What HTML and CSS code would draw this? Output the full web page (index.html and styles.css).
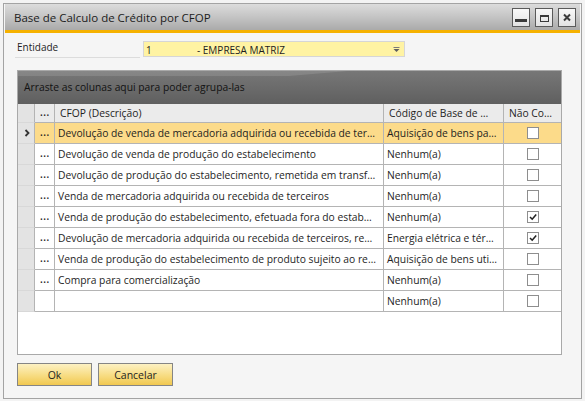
FILE: index.html
```html
<!DOCTYPE html>
<html lang="pt">
<head>
<meta charset="utf-8">
<title>Base de Calculo de Crédito por CFOP</title>
<link rel="stylesheet" href="styles.css">
</head>
<body>
<div class="window">
  <div class="titlebar">
    <span class="title">Base de Calculo de Crédito por CFOP</span>
    <div class="wbtns">
      <span class="wbtn"><svg width="16" height="17" viewBox="0 0 16 17"><rect x="2" y="10" width="12" height="3" fill="#3a3a3a"/></svg></span>
      <span class="wbtn"><svg width="16" height="17" viewBox="0 0 16 17"><rect x="4.5" y="6.5" width="8" height="6" fill="none" stroke="#3a3a3a"/><rect x="4" y="6" width="9" height="2" fill="#3a3a3a"/></svg></span>
      <span class="wbtn"><svg width="16" height="17" viewBox="0 0 16 17"><path d="M5 5.5L11 11.5M11 5.5L5 11.5" stroke="#3a3a3a" stroke-width="2"/></svg></span>
    </div>
  </div>
  <div class="content">
    <div class="field">
      <span class="label">Entidade</span>
      <div class="combo">
        <span class="code">1</span><span class="name">- EMPRESA MATRIZ</span>
        <svg class="arrow" width="7" height="5" viewBox="0 0 7 5"><rect x="0.5" y="0" width="6" height="1" fill="#7a7a7a"/><path d="M0.5 2L6.5 2L3.5 5Z" fill="#5e5e5e"/></svg>
      </div>
    </div>
    <div class="grid">
      <div class="grouppanel">Arraste as colunas aqui para poder agrupa-las</div>
      <div class="row head">
        <div class="c ind"></div>
        <div class="c dots">…</div>
        <div class="c">CFOP (Descrição)</div>
        <div class="c">Código de Base de …</div>
        <div class="c">Não Co…</div>
      </div>
      <div class="row sel">
        <div class="c ind"><svg width="16" height="20" viewBox="0 0 16 20"><path d="M7.5 7L10.5 10L7.5 13" fill="none" stroke="#333" stroke-width="1.8"/></svg></div>
        <div class="c dots">…</div>
        <div class="c">Devolução de venda de mercadoria adquirida ou recebida de ter…</div>
        <div class="c">Aquisição de bens pa…</div>
        <div class="c chk"><span class="cb"></span></div>
      </div>
      <div class="row">
        <div class="c ind"></div>
        <div class="c dots">…</div>
        <div class="c">Devolução de venda de produção do estabelecimento</div>
        <div class="c">Nenhum(a)</div>
        <div class="c chk"><span class="cb"></span></div>
      </div>
      <div class="row">
        <div class="c ind"></div>
        <div class="c dots">…</div>
        <div class="c">Devolução de produção do estabelecimento, remetida em transf…</div>
        <div class="c">Nenhum(a)</div>
        <div class="c chk"><span class="cb"></span></div>
      </div>
      <div class="row">
        <div class="c ind"></div>
        <div class="c dots">…</div>
        <div class="c">Venda de mercadoria adquirida ou recebida de terceiros</div>
        <div class="c">Nenhum(a)</div>
        <div class="c chk"><span class="cb"></span></div>
      </div>
      <div class="row">
        <div class="c ind"></div>
        <div class="c dots">…</div>
        <div class="c">Venda de produção do estabelecimento, efetuada fora do estab…</div>
        <div class="c">Nenhum(a)</div>
        <div class="c chk"><span class="cb"><svg width="10" height="10" viewBox="0 0 10 10"><path d="M2 5L4.2 7.2L8.2 2.6" fill="none" stroke="#222" stroke-width="1.6"/></svg></span></div>
      </div>
      <div class="row">
        <div class="c ind"></div>
        <div class="c dots">…</div>
        <div class="c">Devolução de mercadoria adquirida ou recebida de terceiros, re…</div>
        <div class="c">Energia elétrica e tér…</div>
        <div class="c chk"><span class="cb"><svg width="10" height="10" viewBox="0 0 10 10"><path d="M2 5L4.2 7.2L8.2 2.6" fill="none" stroke="#222" stroke-width="1.6"/></svg></span></div>
      </div>
      <div class="row">
        <div class="c ind"></div>
        <div class="c dots">…</div>
        <div class="c">Venda de produção do estabelecimento de produto sujeito ao re…</div>
        <div class="c">Aquisição de bens uti…</div>
        <div class="c chk"><span class="cb"></span></div>
      </div>
      <div class="row">
        <div class="c ind"></div>
        <div class="c dots">…</div>
        <div class="c">Compra para comercialização</div>
        <div class="c">Nenhum(a)</div>
        <div class="c chk"><span class="cb"></span></div>
      </div>
      <div class="row">
        <div class="c ind"></div>
        <div class="c dots"></div>
        <div class="c"></div>
        <div class="c">Nenhum(a)</div>
        <div class="c chk"><span class="cb"></span></div>
      </div>
    </div>
    <div class="actions">
      <button class="btn">Ok</button>
      <button class="btn">Cancelar</button>
    </div>
  </div>
</div>
</body>
</html>
```
FILE: styles.css
```css
html, body {
  margin: 0;
  padding: 0;
}
body {
  background: #f3f3f3;
  font-family: "Open Sans", "Noto Sans", sans-serif;
  font-size: 10px;
  color: #1e1e1e;
  width: 585px;
  height: 401px;
  overflow: hidden;
}
.window {
  margin: 3px 0 0 3px;
  width: 579px;
  height: 396px;
  box-sizing: border-box;
  border: 1px solid #a3a3a3;
  padding: 0 1px 1px 1px;
  background: #f5f5f5;
  display: flex;
  flex-direction: column;
}
.titlebar {
  height: 29px;
  box-sizing: border-box;
  border-bottom: 3px solid #f5b100;
  background: linear-gradient(180deg, #dcdcdc 0%, #c4c4c4 50%, #aaaaaa 100%);
  display: flex;
  align-items: center;
  justify-content: space-between;
  padding: 0 4px 0 9px;
}
.title {
  font-size: 11.5px;
  color: #1c1c1c;
}
.wbtns {
  display: flex;
  gap: 5px;
}
.wbtn {
  width: 18px;
  height: 19px;
  box-sizing: border-box;
  border: 1px solid #5a5a5a;
  background: linear-gradient(180deg, #f8f8f8, #e2e2e2);
  display: flex;
}
.content {
  flex: 1;
  display: flex;
  flex-direction: column;
  padding: 8px 0 0 10px;
}
.field {
  display: flex;
  align-items: flex-start;
  gap: 3px;
}
.label {
  width: 125px;
  height: 17px;
  box-sizing: border-box;
  padding: 0 0 0 2px;
  border-bottom: 1px solid #dcdcdc;
  line-height: 13px;
}
.combo {
  width: 262px;
  height: 16px;
  box-sizing: border-box;
  border: 1px solid #d6d6d6;
  background: #fff3a3;
  display: flex;
  align-items: center;
  padding: 2px 4px 0 2px;
}
.code {
  width: 51px;
}
.name {
  flex: 1;
}
.arrow {
  margin-top: -2px;
}
.grid {
  margin: 12px 0 0 2px;
  width: 545px;
  height: 285px;
  box-sizing: border-box;
  border: 1px solid #a9a9a9;
  background: #ffffff;
  font-size: 10.3px;
}
.grouppanel {
  position: relative;
  height: 33px;
  box-sizing: border-box;
  padding-left: 6px;
  line-height: 33px;
  background: linear-gradient(180deg, #777777 0%, #6a6a6a 55%, #5f5f5f 100%);
  color: #121212;
}
.grouppanel::before {
  content: "";
  position: absolute;
  left: 0;
  top: 0;
  width: 330px;
  height: 5px;
  background: rgba(255, 255, 255, 0.12);
  clip-path: polygon(0 0, 100% 0, 82% 100%, 0 100%);
}
.row {
  display: grid;
  grid-template-columns: 17px 20px 329px 120px 57px;
  height: 21px;
}
.row.head {
  height: 19px;
  background: #ebebeb;
}
.c {
  box-sizing: border-box;
  border-right: 1px solid #b4b4b4;
  border-bottom: 1px solid #b4b4b4;
  padding: 0 3px;
  line-height: 20px;
  white-space: nowrap;
  overflow: hidden;
  text-overflow: ellipsis;
}
.c:last-child {
  border-right: none;
}
.head .c {
  line-height: 18px;
  padding-left: 5px;
}
.c.ind {
  background: #e3e3e3;
  padding: 0;
  border-bottom-color: #d8d8d8;
}
.c.dots,
.head .c.dots {
  padding: 0;
  text-align: center;
  font-size: 12.5px;
  line-height: 18px;
}
.head .c.dots {
  line-height: 16px;
}
.sel .c {
  background: #fcdb8a;
}
.sel .c.ind {
  background: #e3e3e3;
}
.c.chk {
  display: flex;
  align-items: center;
  justify-content: center;
  padding: 0 0 0 1px;
}
.cb {
  width: 12px;
  height: 12px;
  box-sizing: border-box;
  border: 1px solid #8e8e8e;
  background: #ffffff;
  display: flex;
}
.actions {
  display: flex;
  gap: 6px;
  margin: 8px 0 0 2px;
}
.btn {
  width: 75px;
  height: 23px;
  box-sizing: border-box;
  border: 1px solid #858585;
  background: linear-gradient(180deg, #fdf1c3 0%, #f7dc82 55%, #f1c850 100%);
  font-family: "Open Sans", "Noto Sans", sans-serif;
  font-size: 10.5px;
  color: #1e1e1e;
  padding: 0;
}
```
